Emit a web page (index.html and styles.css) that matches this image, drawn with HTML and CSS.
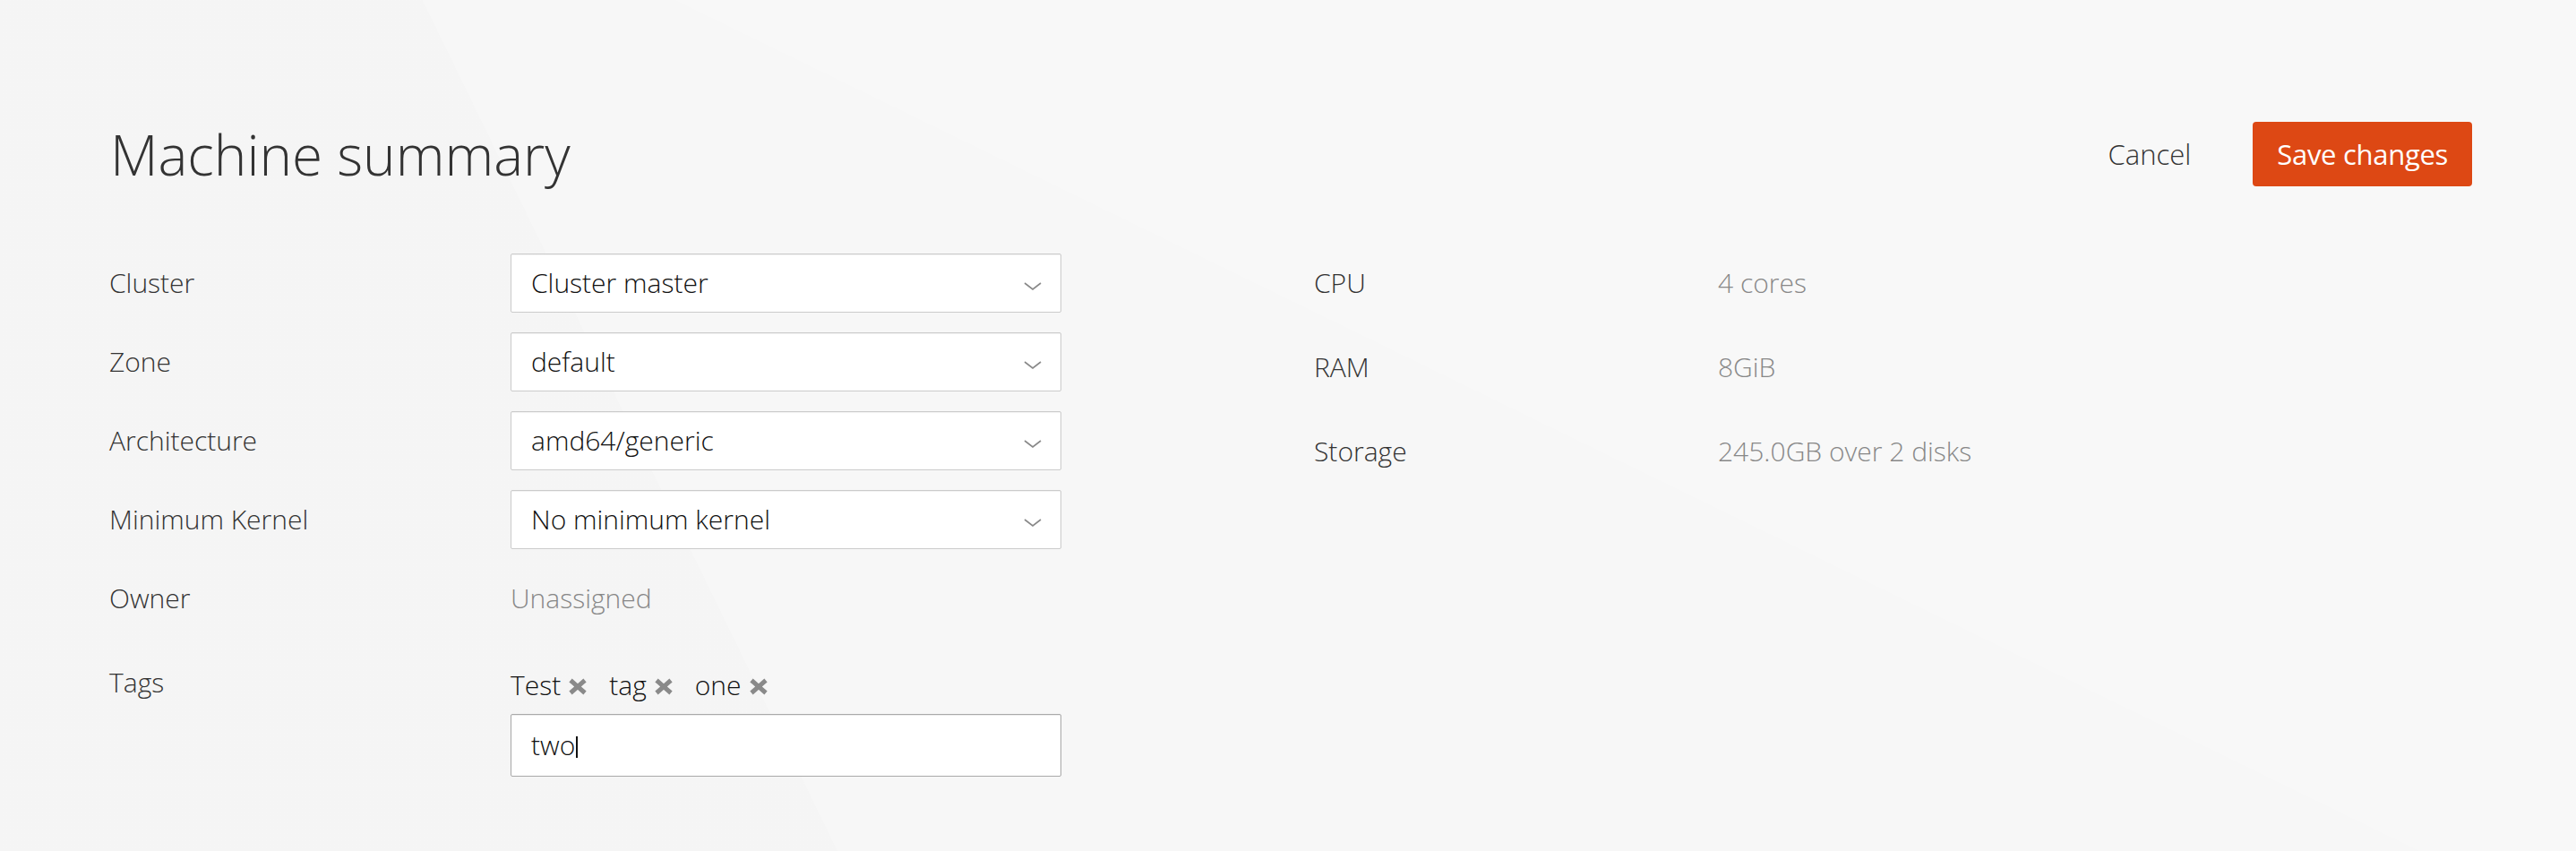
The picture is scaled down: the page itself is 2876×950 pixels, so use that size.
FILE: index.html
```html
<!DOCTYPE html>
<html lang="en">
<head>
<meta charset="utf-8">
<title>Machine summary</title>
<link rel="stylesheet" href="styles.css">
</head>
<body>
<div class="page">
  <header class="page-header">
    <h1 class="title">Machine summary</h1>
    <div class="actions">
      <button class="btn-cancel" type="button">Cancel</button>
      <button class="btn-save" type="button">Save changes</button>
    </div>
  </header>

  <div class="content">
    <div class="form-grid">
      <div class="label">Cluster</div>
      <div class="select">
        <span class="select-value">Cluster master</span>
        <svg class="chevron" viewBox="0 0 20 9" width="20" height="9"><polyline points="1,1 10,8 19,1"/></svg>
      </div>

      <div class="label">Zone</div>
      <div class="select">
        <span class="select-value">default</span>
        <svg class="chevron" viewBox="0 0 20 9" width="20" height="9"><polyline points="1,1 10,8 19,1"/></svg>
      </div>

      <div class="label">Architecture</div>
      <div class="select">
        <span class="select-value">amd64/generic</span>
        <svg class="chevron" viewBox="0 0 20 9" width="20" height="9"><polyline points="1,1 10,8 19,1"/></svg>
      </div>

      <div class="label">Minimum Kernel</div>
      <div class="select">
        <span class="select-value">No minimum kernel</span>
        <svg class="chevron" viewBox="0 0 20 9" width="20" height="9"><polyline points="1,1 10,8 19,1"/></svg>
      </div>

      <div class="label">Owner</div>
      <div class="static-value">Unassigned</div>

      <div class="label label-tags">Tags</div>
      <div class="tags-cell">
        <div class="tags">
          <span class="tag">Test<svg class="tag-x" viewBox="0 0 22 19" width="22" height="19"><path d="M3 2.5 L19 16.5 M19 2.5 L3 16.5"/></svg></span>
          <span class="tag">tag<svg class="tag-x" viewBox="0 0 22 19" width="22" height="19"><path d="M3 2.5 L19 16.5 M19 2.5 L3 16.5"/></svg></span>
          <span class="tag">one<svg class="tag-x" viewBox="0 0 22 19" width="22" height="19"><path d="M3 2.5 L19 16.5 M19 2.5 L3 16.5"/></svg></span>
        </div>
        <div class="text-input"><span class="input-text">two</span><span class="caret"></span></div>
      </div>
    </div>

    <div class="specs">
      <div class="spec-label">CPU</div>
      <div class="spec-value">4 cores</div>
      <div class="spec-label">RAM</div>
      <div class="spec-value">8GiB</div>
      <div class="spec-label">Storage</div>
      <div class="spec-value">245.0GB over 2 disks</div>
    </div>
  </div>
</div>
</body>
</html>
```

FILE: styles.css
```css
html, body {
  margin: 0;
  padding: 0;
}

body {
  min-height: 950px;
  font-family: "Open Sans", Lato, "Liberation Sans", sans-serif;
  font-weight: 300;
  font-size: 30px;
  color: #333;
  background:
    linear-gradient(26deg, rgba(255,255,255,0) 0 56%, rgba(255,255,255,0.18) 56% 100%),
    linear-gradient(64deg, rgba(0,0,0,0.006) 0 28%, rgba(0,0,0,0) 28% 100%),
    #f7f7f7;
}

.page {
  padding: 136px 116px 0 122px;
}

.page-header {
  display: flex;
  justify-content: space-between;
  align-items: center;
  height: 72px;
}

.title {
  margin: 0 0 0 1px;
  font-size: 62px;
  font-weight: 300;
  line-height: 72px;
  color: #333;
}

.actions {
  display: flex;
  align-items: center;
}

.btn-cancel {
  border: 0;
  background: none;
  padding: 0;
  margin-right: 69px;
  font-family: inherit;
  font-weight: 300;
  font-size: 31px;
  color: #333;
}

.btn-save {
  height: 72px;
  padding: 0 27px;
  border: 0;
  border-radius: 4px;
  background: #dd4814;
  color: #fff;
  font-family: inherit;
  font-weight: 400;
  font-size: 31px;
  letter-spacing: -0.3px;
}

.content {
  display: flex;
  align-items: flex-start;
  margin-top: 75px;
  gap: 282px;
}

.form-grid {
  display: grid;
  grid-template-columns: 448px 615px;
  grid-template-rows: repeat(5, 66px) auto;
  row-gap: 22px;
  align-items: center;
}

.label {
  line-height: 44px;
  color: #333;
}

.select {
  box-sizing: border-box;
  height: 66px;
  display: flex;
  align-items: center;
  justify-content: space-between;
  padding: 0 21px 0 22px;
  background: #fff;
  border: 1px solid #cbcbcb;
  border-radius: 2px;
  box-shadow: inset 0 1px 1px rgba(0,0,0,0.06);
}

.select-value {
  color: #111;
  line-height: 44px;
}

.chevron {
  margin-top: 7px;
  fill: none;
  stroke: #888;
  stroke-width: 1.6;
}

.static-value {
  color: #888;
  line-height: 44px;
}

.label-tags {
  align-self: start;
  padding-top: 17px;
}

.tags-cell {
  align-self: start;
  padding-top: 20px;
}

.tags {
  display: flex;
  gap: 24px;
  line-height: 44px;
  margin-bottom: 10px;
}

.tag {
  display: inline-flex;
  align-items: center;
  gap: 8px;
  color: #111;
}

.tag-x {
  flex: none;
  margin-top: 3px;
  fill: none;
  stroke: #8a8a8a;
  stroke-width: 5;
}

.text-input {
  box-sizing: border-box;
  height: 70px;
  display: flex;
  align-items: center;
  padding: 0 22px;
  background: #fff;
  border: 1px solid #a9a9a9;
  border-radius: 2px;
  box-shadow: inset 0 1px 1px rgba(0,0,0,0.08);
}

.input-text {
  color: #111;
  line-height: 44px;
}

.caret {
  display: inline-block;
  width: 2px;
  height: 24px;
  margin-left: 1px;
  margin-top: 4px;
  background: #111;
}

.specs {
  display: grid;
  grid-template-columns: 451px auto;
  grid-auto-rows: 66px;
  row-gap: 28px;
  align-items: center;
}

.spec-label {
  color: #333;
  line-height: 44px;
}

.spec-value {
  color: #888;
  line-height: 44px;
}
```
